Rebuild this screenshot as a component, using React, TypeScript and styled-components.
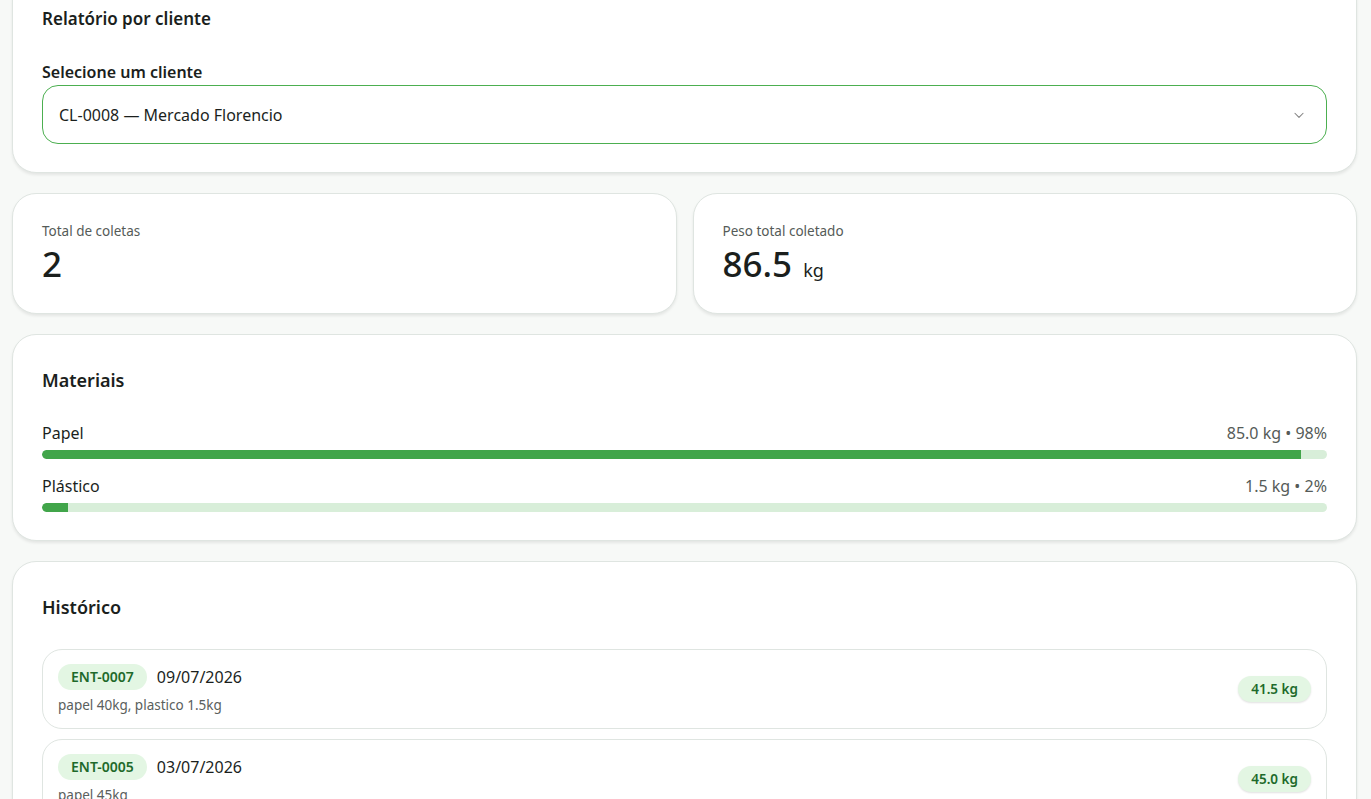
import styled, { createGlobalStyle } from "styled-components";

const GlobalStyle = createGlobalStyle`
    body {
        margin: 0;
        background: #f7f9f7;
        font-family: "Noto Sans", "Open Sans", sans-serif;
        color: #1b1f1d;
    }
    * { box-sizing: border-box; }
`;

const materiais = [
    { nome: "Papel", kg: 85.0, pct: 98 },
    { nome: "Plástico", kg: 1.5, pct: 2 },
];

const historico = [
    { id: "ENT-0007", data: "09/07/2026", desc: "papel 40kg, plastico 1.5kg", peso: "41.5 kg" },
    { id: "ENT-0005", data: "03/07/2026", desc: "papel 45kg", peso: "45.0 kg" },
];

function App() {
    return (
        <>
        <GlobalStyle />
        <Page>
            <Card>
                <CardTitle>Relatório por cliente</CardTitle>
                <FieldLabel>Selecione um cliente</FieldLabel>
                <SelectBox>
                    <span>CL-0008 — Mercado Florencio</span>
                    <svg width="14" height="14" viewBox="0 0 24 24" fill="none" stroke="#808080" strokeWidth="1.8" strokeLinecap="round" strokeLinejoin="round">
                        <path d="M5 9l7 7 7-7" />
                    </svg>
                </SelectBox>
            </Card>

            <StatsRow>
                <StatCard>
                    <StatLabel>Total de coletas</StatLabel>
                    <StatValue>2</StatValue>
                </StatCard>
                <StatCard>
                    <StatLabel>Peso total coletado</StatLabel>
                    <StatValue>86.5 <Unit>kg</Unit></StatValue>
                </StatCard>
            </StatsRow>

            <Card>
                <SectionTitle>Materiais</SectionTitle>
                <MaterialList>
                    {materiais.map((m) => (
                        <MaterialRow key={m.nome}>
                            <MaterialHead>
                                <span>{m.nome}</span>
                                <MaterialInfo>{m.kg.toFixed(1)} kg • {m.pct}%</MaterialInfo>
                            </MaterialHead>
                            <Track>
                                <Fill style={{ width: `${m.pct}%` }} />
                            </Track>
                        </MaterialRow>
                    ))}
                </MaterialList>
            </Card>

            <Card>
                <SectionTitle>Histórico</SectionTitle>
                <HistoryList>
                    {historico.map((h) => (
                        <HistoryItem key={h.id}>
                            <div>
                                <ItemTop>
                                    <Badge>{h.id}</Badge>
                                    <ItemDate>{h.data}</ItemDate>
                                </ItemTop>
                                <ItemDesc>{h.desc}</ItemDesc>
                            </div>
                            <WeightPill>{h.peso}</WeightPill>
                        </HistoryItem>
                    ))}
                </HistoryList>
            </Card>
        </Page>
        </>
    );
}

export default App;

const Page = styled.div`
    display: flex;
    flex-direction: column;
    gap: 20px;
    padding: 0 14px 40px 12px;
    margin-top: -24px;
`;

const Card = styled.div`
    background: #fff;
    border: 1px solid #dfe5e1;
    border-radius: 24px;
    box-shadow: 0 2px 3px rgba(0, 0, 0, 0.08);
    padding: 29px 29px 28px;
`;

const CardTitle = styled.div`
    font-size: 17px;
    font-weight: 600;
    line-height: 26px;
    margin-bottom: 28px;
`;

const FieldLabel = styled.div`
    font-size: 16px;
    font-weight: 600;
    line-height: 24px;
    margin-bottom: 1px;
`;

const SelectBox = styled.div`
    display: flex;
    align-items: center;
    justify-content: space-between;
    height: 59px;
    padding: 0 20px 0 16px;
    border: 1.5px solid #4caf50;
    border-radius: 16px;
    font-size: 16px;
`;

const StatsRow = styled.div`
    display: grid;
    grid-template-columns: 1fr 1fr;
    gap: 16px;
`;

const StatCard = styled(Card)`
    height: 121px;
    padding: 27px 29px;
`;

const StatLabel = styled.div`
    font-size: 13.5px;
    color: #555b58;
    line-height: 20px;
    margin-bottom: 3px;
`;

const StatValue = styled.div`
    font-size: 35px;
    font-weight: 500;
    line-height: 40px;
`;

const Unit = styled.span`
    font-size: 18px;
    font-weight: 400;
    margin-left: 2px;
`;

const SectionTitle = styled.div`
    font-size: 18px;
    font-weight: 600;
    line-height: 32px;
    margin-bottom: 26px;
`;

const MaterialList = styled.div`
    display: flex;
    flex-direction: column;
    gap: 16px;
`;

const MaterialRow = styled.div`
    display: flex;
    flex-direction: column;
    gap: 6px;
`;

const MaterialHead = styled.div`
    display: flex;
    justify-content: space-between;
    font-size: 16px;
    line-height: 22px;
`;

const MaterialInfo = styled.span`
    font-size: 16px;
    color: #555b58;
`;

const Track = styled.div`
    height: 9px;
    border-radius: 5px;
    background: #d8eed9;
    overflow: hidden;
`;

const Fill = styled.div`
    height: 100%;
    background: #41a54a;
    border-radius: 5px 0 0 5px;
`;

const HistoryList = styled.div`
    display: flex;
    flex-direction: column;
    gap: 10px;
    margin-top: 22px;
`;

const HistoryItem = styled.div`
    display: flex;
    align-items: center;
    justify-content: space-between;
    height: 80px;
    padding: 0 15px;
    border: 1px solid #dfe5e1;
    border-radius: 20px;
`;

const ItemTop = styled.div`
    display: flex;
    align-items: center;
    gap: 10px;
`;

const Badge = styled.span`
    background: #e3f6e3;
    color: #1e6a2b;
    font-weight: 600;
    font-size: 14px;
    padding: 3px 13px;
    border-radius: 14px;
    line-height: 20px;
`;

const ItemDate = styled.span`
    font-size: 16px;
`;

const ItemDesc = styled.div`
    font-size: 13.5px;
    color: #5a605d;
    margin-top: 6px;
`;

const WeightPill = styled.span`
    background: #e3f6e3;
    color: #1e6a2b;
    font-weight: 600;
    font-size: 13.5px;
    padding: 3px 13px;
    border-radius: 14px;
    line-height: 20px;
    box-shadow: 0 1px 2px rgba(0, 0, 0, 0.12);
`;
